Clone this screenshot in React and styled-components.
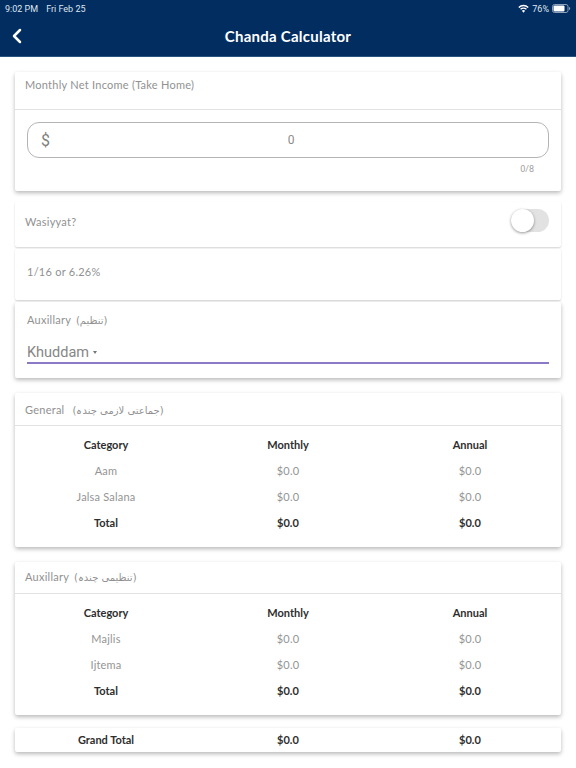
import React from 'react'
import styled, { createGlobalStyle } from 'styled-components'
import { ChevronLeft } from 'lucide-react'

const GlobalStyle = createGlobalStyle`
  html, body {
    margin: 0;
    padding: 0;
    background: #fff;
    font-family: Lato, "DejaVu Sans", sans-serif;
  }
`

const Page = styled.div`
  width: 576px;
  height: 768px;
  overflow: hidden;
  background: #fff;
`

const TopBar = styled.header`
  height: 57px;
  background: #022d61;
  color: #fff;
  box-sizing: border-box;
  border-bottom: 1px solid #27557f;
`

const StatusBar = styled.div`
  height: 17px;
  padding: 0 5px;
  display: flex;
  align-items: center;
  justify-content: space-between;
  font-family: Roboto, sans-serif;
  font-size: 9px;
  color: #dfe6ee;
`

const StatusLeft = styled.div`
  display: flex;
  gap: 8px;
`

const StatusRight = styled.div`
  display: flex;
  align-items: center;
  gap: 3px;
`

const NavBar = styled.div`
  height: 38px;
  display: grid;
  grid-template-columns: 40px 1fr 40px;
  align-items: center;
`

const BackButton = styled.div`
  display: flex;
  padding-left: 5px;
`

const Title = styled.h1`
  margin: 0;
  text-align: center;
  font-size: 15px;
  font-weight: 700;
  letter-spacing: 0.25px;
`

const Content = styled.main`
  padding: 15px 15px 0;
  display: flex;
  flex-direction: column;
`

const Card = styled.section`
  background: #fff;
  border-radius: 2px;
  margin-bottom: ${(p) => p.$gap || 0}px;
  box-shadow: 0 ${(p) => (p.$flat ? 1 : 2)}px ${(p) => (p.$flat ? 2 : 4)}px rgba(0, 0, 0, ${(p) => (p.$flat ? 0.18 : 0.28)});
`

const CardHeader = styled.div`
  height: ${(p) => p.$h}px;
  box-sizing: border-box;
  padding: ${(p) => p.$top}px ${(p) => p.$left || 10}px 0;
  border-bottom: ${(p) => (p.$noline ? 'none' : '1px solid #e2e2e2')};
  font-size: 11px;
  letter-spacing: 0.25px;
  color: #919191;
  display: flex;
  justify-content: space-between;
  align-items: flex-start;
`

const InputWrap = styled.div`
  padding: 12px 12px 0;
  height: 81px;
  box-sizing: border-box;
`

const InputBox = styled.div`
  height: 36px;
  box-sizing: border-box;
  border: 1px solid #b4b4b4;
  border-radius: 12px;
  padding: 0 13px;
  display: grid;
  grid-template-columns: 1fr auto 1fr;
  align-items: center;
  font-family: Roboto, sans-serif;
  color: #8c8c8c;
  font-size: 12px;
`

const Dollar = styled.span`
  font-size: 16px;
  color: #7f7f7f;
`

const Zero = styled.span`
  padding-left: 6px;
`

const Counter = styled.div`
  text-align: right;
  font-family: Roboto, sans-serif;
  font-size: 9px;
  color: #a0a0a0;
  margin-top: 6px;
  padding-right: 15px;
`

const Switch = styled.div`
  width: 38px;
  height: 23px;
  margin-top: -6px;
  margin-right: 2px;
  border-radius: 12px;
  background: #e2e2e2;
  position: relative;
`

const Knob = styled.span`
  position: absolute;
  left: 0;
  top: 0;
  width: 23px;
  height: 23px;
  box-sizing: border-box;
  border-radius: 50%;
  background: #fff;
  box-shadow: 0 1px 3px rgba(0, 0, 0, 0.4);
`

const AuxCard = styled.div`
  height: 76px;
  box-sizing: border-box;
  padding: 11px 12px 0;
`

const AuxLabel = styled.div`
  font-size: 11px;
  letter-spacing: 0.25px;
  color: #919191;
`

const Select = styled.div`
  margin-top: 16px;
  height: 22px;
  box-sizing: border-box;
  border-bottom: 2px solid #8b78c6;
  font-family: Roboto, sans-serif;
  font-size: 14.5px;
  color: #868686;
  display: flex;
  align-items: center;
  gap: 4px;
`

const Caret = styled.span`
  width: 0;
  height: 0;
  border-left: 2.5px solid transparent;
  border-right: 2.5px solid transparent;
  border-top: 3px solid #777;
`

const Grid = styled.div`
  display: grid;
  grid-template-columns: repeat(3, 1fr);
  padding: ${(p) => p.$pad || '5px 0 12px'};
`

const Cell = styled.div`
  height: ${(p) => p.$h || 26}px;
  display: flex;
  align-items: center;
  justify-content: center;
  font-size: 11px;
  letter-spacing: ${(p) => (p.$strong ? 0 : 0.2)}px;
  font-weight: ${(p) => (p.$strong ? 700 : 400)};
  color: ${(p) => (p.$strong ? '#2e2e2e' : '#949494')};
`

const Urdu = styled.span`
  font-family: "DejaVu Sans", sans-serif;
  font-size: 10px;
  letter-spacing: 0;
  margin-left: ${(p) => p.$gap || 2}px;
`

function Wifi() {
  return (
    <svg width="11" height="9" viewBox="0 0 12 9" fill="#fff">
      <path d="M6 9 4.2 6.9a2.6 2.6 0 0 1 3.6 0L6 9Z" />
      <path d="M3.3 5.9 2.3 4.8a5.4 5.4 0 0 1 7.4 0l-1 1.1a4 4 0 0 0-5.4 0Z" />
      <path d="M1.4 3.9.3 2.8a8.2 8.2 0 0 1 11.4 0l-1.1 1.1a6.7 6.7 0 0 0-9.2 0Z" />
    </svg>
  )
}

function Battery() {
  return (
    <svg width="19" height="9" viewBox="0 0 19 9">
      <rect x="0.5" y="0.5" width="15.5" height="8" rx="2" fill="none" stroke="#8da0b8" />
      <rect x="1.5" y="1.5" width="11" height="6" rx="1" fill="#fff" />
      <path d="M17 3v3c.8-.2 1.2-.8 1.2-1.5S17.8 3.2 17 3Z" fill="#8da0b8" />
    </svg>
  )
}

function ChandaTable({ rows }) {
  return (
    <Grid>
      <Cell $strong>Category</Cell>
      <Cell $strong>Monthly</Cell>
      <Cell $strong>Annual</Cell>
      {rows.map((name) => (
        <React.Fragment key={name}>
          <Cell>{name}</Cell>
          <Cell>$0.0</Cell>
          <Cell>$0.0</Cell>
        </React.Fragment>
      ))}
      <Cell $strong>Total</Cell>
      <Cell $strong>$0.0</Cell>
      <Cell $strong>$0.0</Cell>
    </Grid>
  )
}

export default function App() {
  return (
    <Page>
      <GlobalStyle />
      <TopBar>
        <StatusBar>
          <StatusLeft>
            <span>9:02 PM</span>
            <span>Fri Feb 25</span>
          </StatusLeft>
          <StatusRight>
            <Wifi />
            <span>76%</span>
            <Battery />
          </StatusRight>
        </StatusBar>
        <NavBar>
          <BackButton>
            <ChevronLeft size={24} strokeWidth={2.5} color="#fff" />
          </BackButton>
          <Title>Chanda Calculator</Title>
          <span />
        </NavBar>
      </TopBar>
      <Content>
        <Card $gap={11}>
          <CardHeader $h={38} $top={6}>Monthly Net Income (Take Home)</CardHeader>
          <InputWrap>
            <InputBox>
              <Dollar>$</Dollar>
              <Zero>0</Zero>
            </InputBox>
            <Counter>0/8</Counter>
          </InputWrap>
        </Card>
        <Card $flat $gap={2}>
          <CardHeader $h={45} $top={13} $noline>
            Wasiyyat?
            <Switch>
              <Knob />
            </Switch>
          </CardHeader>
        </Card>
        <Card $flat $gap={2}>
          <CardHeader $h={51} $top={16} $left={12} $noline>1/16 or 6.26%</CardHeader>
        </Card>
        <Card $gap={15}>
          <AuxCard>
            <AuxLabel>
              Auxillary <Urdu>(تنظیم)</Urdu>
            </AuxLabel>
            <Select>
              Khuddam <Caret />
            </Select>
          </AuxCard>
        </Card>
        <Card $gap={15}>
          <CardHeader $h={33} $top={10}>
            <span>
              General <Urdu $gap={5}>(جماعتی لازمی چندہ)</Urdu>
            </span>
          </CardHeader>
          <ChandaTable rows={['Aam', 'Jalsa Salana']} />
        </Card>
        <Card $gap={13}>
          <CardHeader $h={32} $top={8}>
            <span>
              Auxillary <Urdu>(تنظیمی چندہ)</Urdu>
            </span>
          </CardHeader>
          <ChandaTable rows={['Majlis', 'Ijtema']} />
        </Card>
        <Card>
          <Grid $pad="0 0 2px">
            <Cell $strong $h={22}>Grand Total</Cell>
            <Cell $strong $h={22}>$0.0</Cell>
            <Cell $strong $h={22}>$0.0</Cell>
          </Grid>
        </Card>
      </Content>
    </Page>
  )
}
